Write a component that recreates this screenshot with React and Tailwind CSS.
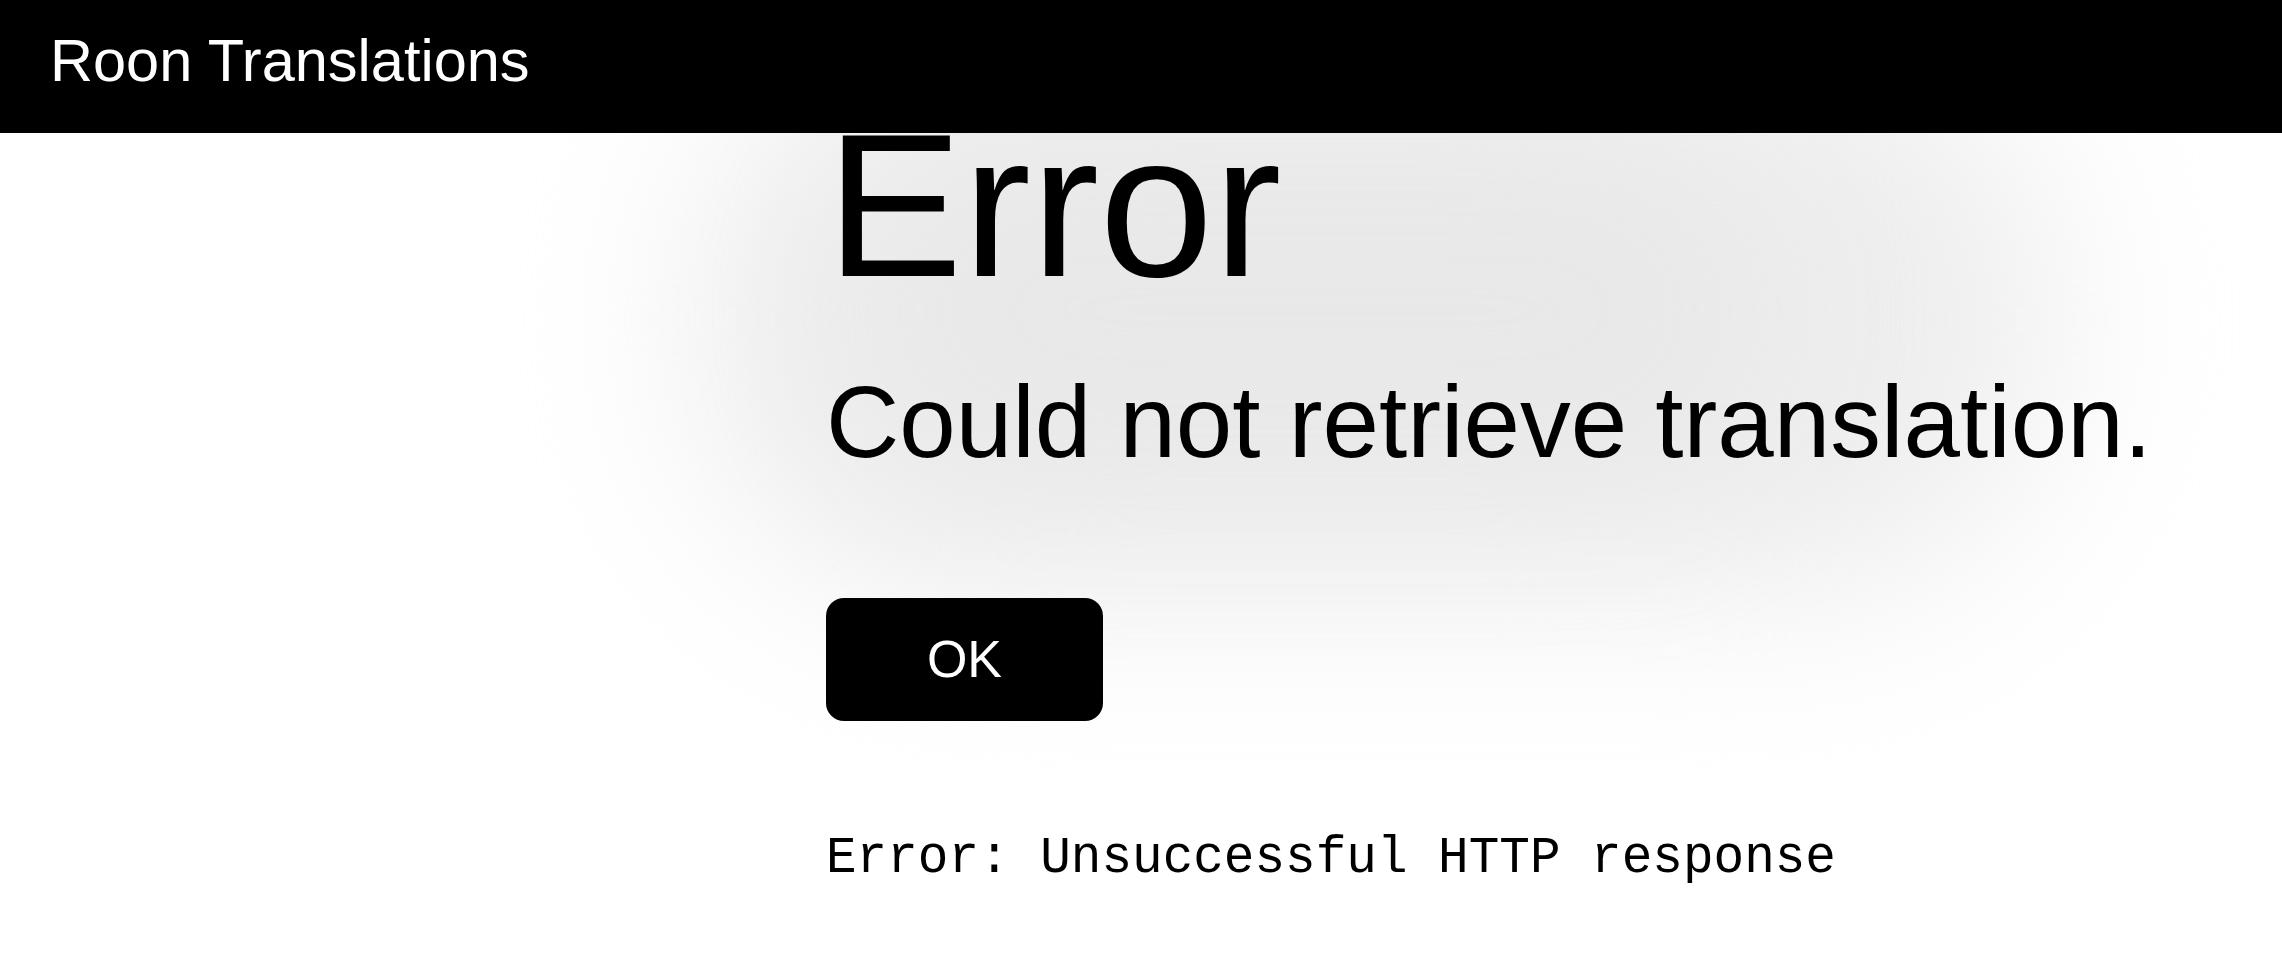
export default function App() {
  return (
    <div className="relative min-h-[970px] overflow-hidden bg-white font-['Liberation_Sans',Arial,sans-serif] text-black">
      {/* soft shadow behind the dialog */}
      <div
        aria-hidden="true"
        className="pointer-events-none absolute left-[690px] top-[40px] h-[560px] w-[1370px] rounded-[260px] bg-[#eeeeee] blur-[90px]"
      />
      <div
        aria-hidden="true"
        className="pointer-events-none absolute left-[860px] top-[140px] h-[340px] w-[900px] rounded-[200px] bg-[#e8e8e8] blur-[80px]"
      />

      <header className="fixed inset-x-0 top-0 z-10 h-[133px] bg-black pl-[50px] pt-[31px]">
        <h1 className="text-[59.5px] leading-none font-normal text-white">Roon Translations</h1>
      </header>

      <main className="relative ml-[826px] pt-[102px]">
        <h2 className="text-[205px] leading-none font-normal">Error</h2>
        <p className="mt-[65px] text-[101.5px] leading-none whitespace-nowrap">
          Could not retrieve translation.
        </p>
        <button
          type="button"
          className="mt-[124px] flex h-[123px] w-[277px] items-center justify-center rounded-[18px] bg-black text-[52px] leading-none text-white"
        >
          OK
        </button>
        <pre className="mt-[112px] font-['Liberation_Mono',monospace] text-[51px] leading-none">
          Error: Unsuccessful HTTP response
        </pre>
      </main>
    </div>
  );
}
